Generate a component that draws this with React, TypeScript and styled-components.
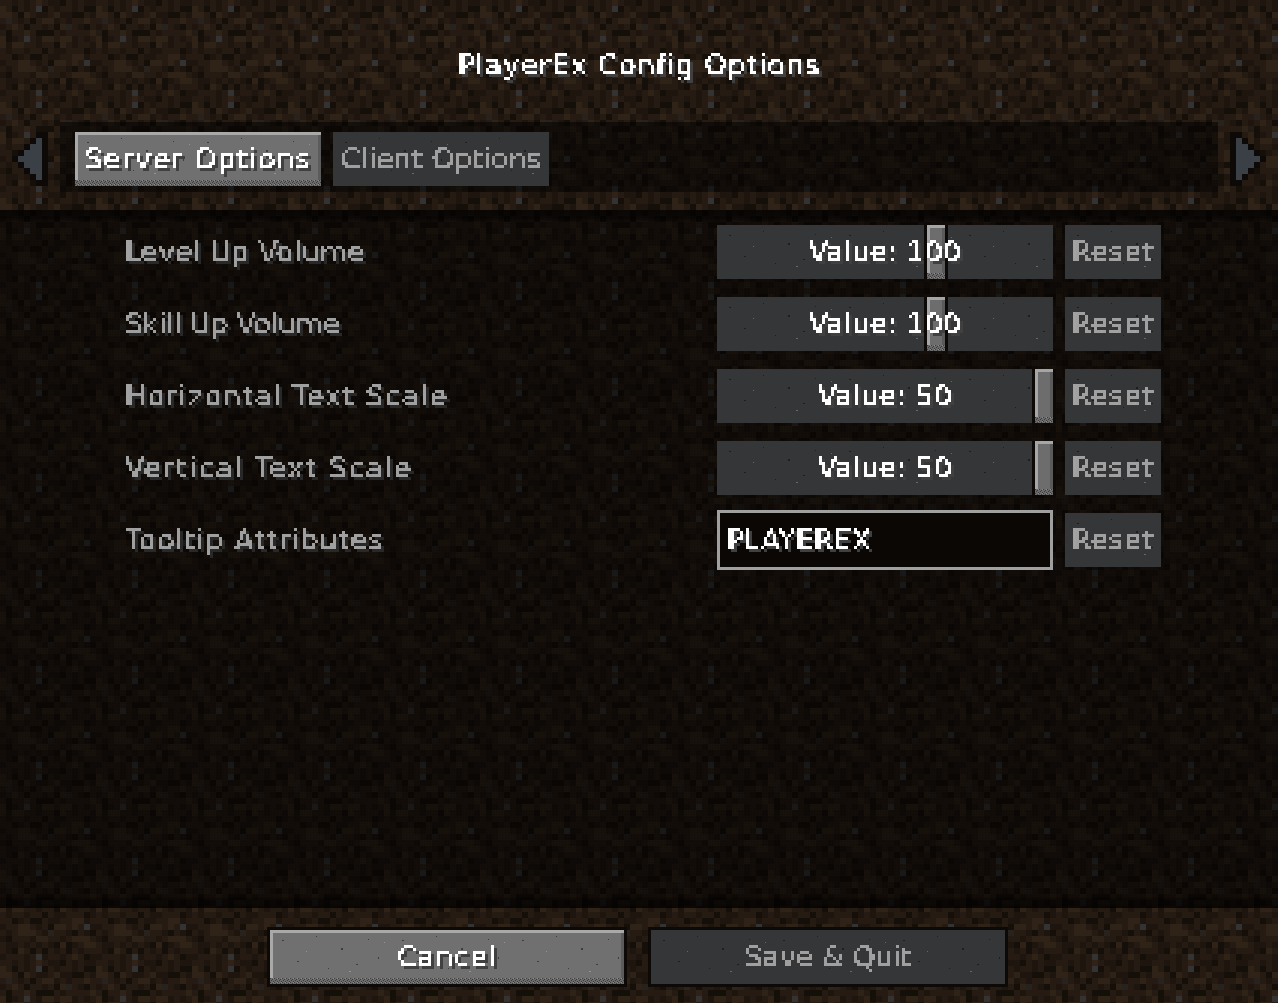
import React from 'react';
import styled, { createGlobalStyle, css } from 'styled-components';

// dirt block, 16x16 texels, 6px each
const DIRT = [
  '2212123211021211',
  '320212g021221200',
  '3320321123110021',
  '2s21202331212232',
  '12320221203s2102',
  '2022320002122223',
  '3012g21332331212',
  '3133221220321221',
  '2122122021122201',
  '2201200211223312',
  '1223321203323 2g1'.replace(' ', '').slice(0, 16),
  '21233321s2210210',
  '1022213322123332',
  '2112121210301233',
  '2103202021202122',
  '122212g122123201',
];

const TEXEL: Record<string, string> = {
  '0': '#150f0a',
  '1': '#1d150e',
  '2': '#261b12',
  '3': '#2f2217',
  g: '#343333',
  s: '#27221e',
};

const toUri = (svg: string) => `url("data:image/svg+xml,${encodeURIComponent(svg)}")`;

const dirtUri = toUri(
  `<svg xmlns="http://www.w3.org/2000/svg" width="96" height="96" shape-rendering="crispEdges">${DIRT.map((row, y) =>
    row
      .split('')
      .map((c, x) => `<rect x="${x * 6}" y="${y * 6}" width="6" height="6" fill="${TEXEL[c]}"/>`)
      .join(''),
  ).join('')}</svg>`,
);

const dotsUri = toUri(
  `<svg xmlns="http://www.w3.org/2000/svg" width="3" height="3" shape-rendering="crispEdges"><rect x="1" y="1" width="1" height="1" fill="#000" opacity=".22"/></svg>`,
);

const ditherUri = toUri(
  `<svg xmlns="http://www.w3.org/2000/svg" width="4" height="4" shape-rendering="crispEdges"><rect width="4" height="4" fill="#6b6b6b"/><rect width="1" height="1" fill="#3d3d3d"/><rect x="2" y="1" width="1" height="1" fill="#3d3d3d"/><rect x="1" y="2" width="1" height="1" fill="#3d3d3d"/><rect x="3" y="3" width="1" height="1" fill="#3d3d3d"/><rect x="3" y="0" width="1" height="1" fill="#8a8a8a"/></svg>`,
);

const speckUri = toUri(
  `<svg xmlns="http://www.w3.org/2000/svg" width="120" height="54" shape-rendering="crispEdges"><g fill="#000" opacity=".45"><rect x="12" y="10" width="2" height="1"/><rect x="46" y="6" width="1" height="1"/><rect x="71" y="18" width="2" height="2"/><rect x="98" y="9" width="1" height="1"/><rect x="27" y="31" width="2" height="1"/><rect x="58" y="38" width="1" height="1"/><rect x="86" y="34" width="2" height="1"/><rect x="108" y="27" width="1" height="2"/></g><g fill="#fff" opacity=".25"><rect x="36" y="21" width="1" height="1"/><rect x="79" y="41" width="2" height="1"/><rect x="114" y="12" width="1" height="1"/></g></svg>`,
);

const GlobalStyle = createGlobalStyle`
  html, body {
    margin: 0;
    padding: 0;
    background: #1d150e;
  }
`;

const Screen = styled.div`
  width: 1278px;
  height: 1003px;
  overflow: hidden;
  display: flex;
  flex-direction: column;
  background-image: ${dirtUri};
  background-size: 96px 96px;
  image-rendering: pixelated;
  font-family: 'DejaVu Sans', sans-serif;
  font-size: 28px;
  line-height: 32px;
`;

const Filters = styled.svg`
  display: block;
  width: 0;
  height: 0;
`;

const PixelText = styled.span<{ $color?: string; $flat?: boolean; $track?: number }>`
  position: relative;
  z-index: 1;
  display: inline-block;
  margin-left: 4px;
  padding: 6px 6px 4px 2px;
  white-space: pre;
  color: ${(p) => p.$color ?? '#fff'};
  letter-spacing: ${(p) => p.$track ?? 0}px;
  filter: url(${(p) => (p.$flat ? '#pixel-flat' : '#pixel-shadow')});
`;

const Title = styled.header`
  height: 122px;
  display: flex;
  align-items: center;
  justify-content: center;
  padding-top: 8px;
  box-sizing: border-box;
`;

const TabRow = styled.nav`
  height: 70px;
  display: flex;
  gap: 12px;
  padding: 0 12px;
`;

const ArrowIcon = styled.svg<{ $left?: boolean }>`
  flex: none;
  width: 36px;
  height: 54px;
  margin-top: 10px;
  transform: ${(p) => (p.$left ? 'scaleX(-1)' : 'none')};
`;

const TabBar = styled.div`
  flex: 1;
  display: flex;
  gap: 12px;
  padding: 10px 15px;
  background: rgba(0, 0, 0, 0.5);
  background-image: ${dotsUri};
`;

const buttonBase = css`
  position: relative;
  display: flex;
  align-items: center;
  justify-content: center;
  box-sizing: border-box;
  height: 54px;
  background-image: ${speckUri};
`;

const activeFace = css`
  background-color: #707070;
  box-shadow: inset 3px 3px 0 #a9a9a9, inset -3px 0 0 #5c5c5c;
  &::after {
    content: '';
    position: absolute;
    left: 0;
    right: 0;
    bottom: 0;
    height: 6px;
    background-image: ${ditherUri};
  }
`;

const Tab = styled.div<{ $active?: boolean; $width: number }>`
  ${buttonBase}
  width: ${(p) => p.$width}px;
  ${(p) => (p.$active ? activeFace : 'background-color: #353637;')}
`;

const List = styled.main`
  margin-top: 18px;
  height: 698px;
  padding-top: 15px;
  box-sizing: border-box;
  display: flex;
  flex-direction: column;
  gap: 18px;
  background-color: rgba(0, 0, 0, 0.5);
  background-image: linear-gradient(rgba(0, 0, 0, 0.55), rgba(0, 0, 0, 0.45) 8px, transparent 12px),
    linear-gradient(transparent calc(100% - 12px), rgba(0, 0, 0, 0.45) calc(100% - 8px), rgba(0, 0, 0, 0.55)), ${dotsUri};
`;

const Row = styled.div`
  height: 54px;
  display: flex;
  align-items: center;
  gap: 12px;
  padding: 0 117px 0 119px;
`;

const Label = styled.div`
  flex: 1;
`;

const Slider = styled.div`
  ${buttonBase}
  width: 336px;
  background-color: #353637;
`;

const Handle = styled.div`
  position: absolute;
  top: 0;
  bottom: 0;
  width: 18px;
  background-color: #6d6d6d;
  box-shadow: inset 3px 3px 0 #a6a6a6, inset -3px 0 0 #5a5a5a, -3px 0 0 #0c0906, 3px 0 0 #0c0906;
  &::after {
    content: '';
    position: absolute;
    left: 0;
    right: 0;
    bottom: 0;
    height: 6px;
    background-image: ${ditherUri};
  }
`;

const Reset = styled.div`
  ${buttonBase}
  width: 96px;
  background-color: #353637;
`;

const TextField = styled.div`
  width: 336px;
  height: 60px;
  margin: -3px 0;
  box-sizing: border-box;
  display: flex;
  align-items: center;
  padding-left: 1px;
  border: 3px solid #a0a0a0;
  background: #0a0704;
`;

const Footer = styled.footer`
  display: flex;
  justify-content: center;
  gap: 21px;
  padding: 19px 3px 0 0;
`;

const FooterButton = styled.div<{ $active?: boolean }>`
  ${buttonBase}
  width: 354px;
  margin: 3px;
  outline: 3px solid #0c0906;
  ${(p) => (p.$active ? activeFace : 'background-color: #353637;')}
`;

const GREY = '#a0a0a0';

const settings = [
  { label: 'Level Up Volume', value: 100, at: 210 / 318, track: 0.4 },
  { label: 'Skill Up Volume', value: 100, at: 210 / 318, track: -0.2 },
  { label: 'Horizontal Text Scale', value: 50, at: 1, track: 1.45 },
  { label: 'Vertical Text Scale', value: 50, at: 1, track: 1.75 },
];

const ResetButton = () => (
  <Reset>
    <PixelText $color={GREY} $flat $track={0.8}>
      Reset
    </PixelText>
  </Reset>
);

const Arrow = ({ left }: { left?: boolean }) => (
  <ArrowIcon $left={left} viewBox="0 0 36 54" shapeRendering="crispEdges">
    <path fill="#0c0906" d="M0 0h12v6h6v6h6v6h6v6h6v6h-6v6h-6v6h-6v6h-6v6H0z" />
    <path fill="#3b4046" d="M6 6h6v6h6v6h6v6h6v6h-6v6h-6v6h-6v6H6z" />
  </ArrowIcon>
);

const PixelFilter = ({ id, shadow }: { id: string; shadow?: boolean }) => (
  <filter id={id} x="0" y="0" width="100%" height="100%" colorInterpolationFilters="sRGB">
    <feGaussianBlur in="SourceGraphic" stdDeviation="0.7" result="soft" />
    <feFlood x="1" y="1" width="1" height="1" floodColor="#000" />
    <feComposite width="3" height="3" />
    <feTile result="grid" />
    <feComposite in="soft" in2="grid" operator="in" />
    <feMorphology operator="dilate" radius="1" />
    <feComponentTransfer result="glyphs">
      <feFuncA type="discrete" tableValues="0 0 1 1 1 1 1 1" />
    </feComponentTransfer>
    {shadow && <feOffset in="glyphs" dx="3" dy="3" />}
    {shadow && <feColorMatrix values=".25 0 0 0 0 0 .25 0 0 0 0 0 .25 0 0 0 0 0 1 0" result="shade" />}
    {shadow && (
      <feMerge>
        <feMergeNode in="shade" />
        <feMergeNode in="glyphs" />
      </feMerge>
    )}
  </filter>
);

const App = () => {
  return (
    <Screen>
      <GlobalStyle />
      <Filters aria-hidden="true">
        <defs>
          <PixelFilter id="pixel-shadow" shadow />
          <PixelFilter id="pixel-flat" />
        </defs>
      </Filters>

      <Title>
        <PixelText $track={1.1}>PlayerEx Config Options</PixelText>
      </Title>

      <TabRow>
        <Arrow left />
        <TabBar>
          <Tab $active $width={246}>
            <PixelText $track={1.3}>Server Options</PixelText>
          </Tab>
          <Tab $width={216}>
            <PixelText $color={GREY} $flat $track={0.2}>
              Client Options
            </PixelText>
          </Tab>
        </TabBar>
        <Arrow />
      </TabRow>

      <List>
        {settings.map((s) => (
          <Row key={s.label}>
            <Label>
              <PixelText $color={GREY} $track={s.track}>
                {s.label}
              </PixelText>
            </Label>
            <Slider>
              <Handle style={{ left: s.at * 318 }} />
              <PixelText $track={0.4}>Value: {s.value}</PixelText>
            </Slider>
            <ResetButton />
          </Row>
        ))}
        <Row>
          <Label>
            <PixelText $color={GREY} $track={1.2}>
              Tooltip Attributes
            </PixelText>
          </Label>
          <TextField>
            <PixelText $track={0.4}>PLAYEREX</PixelText>
          </TextField>
          <ResetButton />
        </Row>
      </List>

      <Footer>
        <FooterButton $active>
          <PixelText $track={0.8}>Cancel</PixelText>
        </FooterButton>
        <FooterButton>
          <PixelText $color={GREY} $flat>
            Save &amp; Quit
          </PixelText>
        </FooterButton>
      </Footer>
    </Screen>
  );
};

export default App;
